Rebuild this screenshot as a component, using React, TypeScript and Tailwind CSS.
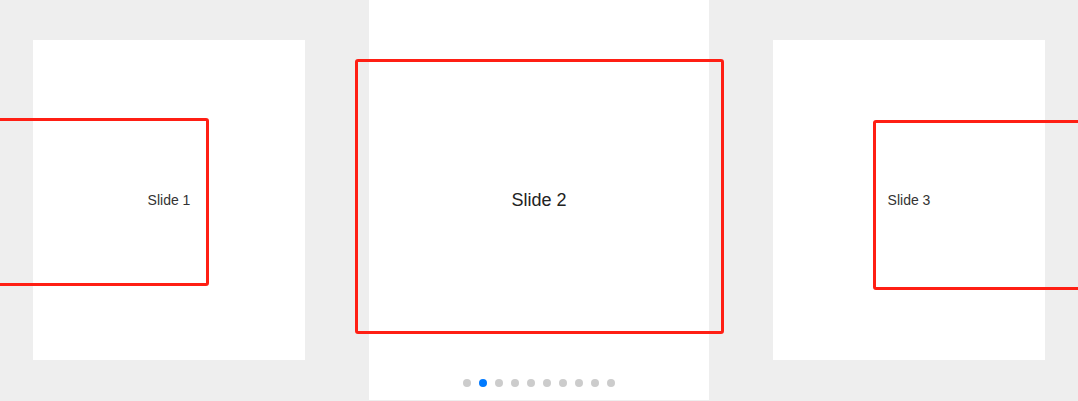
const bullets = Array.from({ length: 10 }, (_, i) => i);

function Slide({
  label,
  active,
  frame,
}: {
  label: string;
  active?: boolean;
  frame: string;
}) {
  return (
    <div
      className={
        active
          ? 'relative flex h-[400px] w-[340px] shrink-0 items-center justify-center bg-white text-[18px] text-[#222]'
          : 'relative flex h-[320px] w-[272px] shrink-0 items-center justify-center bg-white text-[14px] text-[#333]'
      }
    >
      <span className="relative z-10">{label}</span>
      <div className={`pointer-events-none absolute rounded-[3px] border-[3px] border-[#ff1f14] ${frame}`} />
    </div>
  );
}

export default function App() {
  return (
    <div
      className="relative h-[401px] w-full overflow-hidden bg-[#eeeeee]"
      style={{ fontFamily: '"Liberation Sans", Arial, sans-serif' }}
    >
      <div className="flex h-[400px] items-center justify-center gap-16">
        <Slide label="Slide 1" frame="left-[-80px] top-[78px] h-[168px] w-[256px]" />
        <Slide label="Slide 2" active frame="left-[-14px] top-[59px] h-[275px] w-[369px]" />
        <Slide label="Slide 3" frame="left-[100px] top-[80px] h-[170px] w-[260px]" />
      </div>
      <div className="absolute bottom-[14px] left-0 right-0 flex justify-center gap-2">
        {bullets.map((i) => (
          <span
            key={i}
            className={i === 1 ? 'h-2 w-2 rounded-full bg-[#007aff]' : 'h-2 w-2 rounded-full bg-[#cccccc]'}
          />
        ))}
      </div>
    </div>
  );
}
